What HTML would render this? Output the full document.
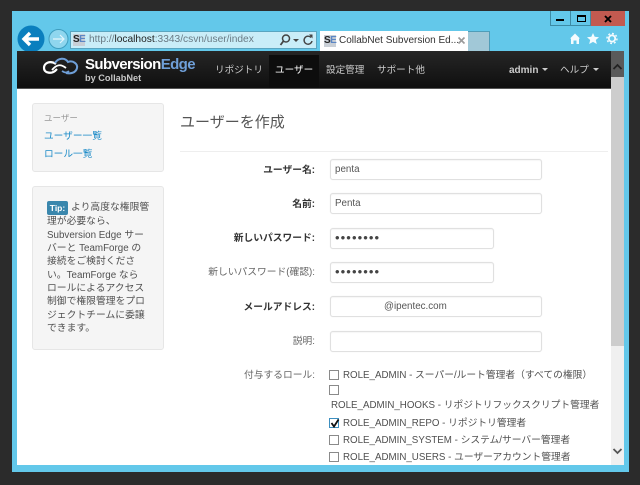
<!DOCTYPE html>
<html lang="ja"><head><meta charset="utf-8"><title>ユーザーを作成</title>
<style>
html,body{margin:0;padding:0;background:#2b2b2b}
body{width:640px;height:485px;position:relative;overflow:hidden;font-family:"Liberation Sans","Noto Sans CJK JP",sans-serif;font-size:9.8px;color:#505050}
.a{position:absolute;white-space:nowrap}
.inp{position:absolute;box-sizing:border-box;height:21px;border:1px solid #e0e0e0;border-radius:3px;background:#fff;font-size:9.8px;color:#555;line-height:21px;padding-left:4px;box-shadow:inset 0 1px 1px rgba(0,0,0,.04),0 0 1px rgba(0,0,0,.1)}
.lb{position:absolute;right:325px;white-space:nowrap;font-size:9.75px;color:#666;line-height:14px;margin-top:1px}
.lb.b{font-weight:bold;color:#333}
.cb{position:absolute;left:329px;width:8px;height:8px;border:1px solid #8a8a8a;background:#fff}
.role{position:absolute;white-space:nowrap;font-size:9.75px;color:#505050;line-height:14px;margin-top:1px}
.nav{position:absolute;top:64px;font-size:9.6px;color:#ccc;white-space:nowrap;line-height:14px}
.car{display:inline-block;width:0;height:0;border-left:3px solid transparent;border-right:3px solid transparent;border-top:3px solid #ccc;margin-left:4px;vertical-align:2px}
.dots{letter-spacing:1.1px;font-size:13px;color:#444;line-height:18px}
</style></head><body>
<!-- window frame -->
<div class="a" style="left:12px;top:11px;width:617px;height:461px;background:#63c8ea"></div>
<!-- window buttons -->
<div class="a" style="left:550px;top:11px;width:21px;height:15px;box-sizing:border-box;border:1px solid #3d8ba5;border-top:0;background:#63c8ea"></div>
<div class="a" style="left:571px;top:11px;width:20px;height:15px;box-sizing:border-box;border:1px solid #3d8ba5;border-top:0;border-left:0;background:#63c8ea"></div>
<div class="a" style="left:591px;top:11px;width:34px;height:15px;background:#c25a50"></div>
<div class="a" style="left:556px;top:19px;width:8px;height:2px;background:#000"></div>
<div class="a" style="left:577px;top:15px;box-sizing:border-box;width:9px;height:7px;border:1px solid #000;border-top-width:2px"></div>
<svg class="a" style="left:604px;top:15px" width="8" height="8" viewBox="0 0 8 8"><path d="M1 1 L7 7 M7 1 L1 7" stroke="#000" stroke-width="1.900" fill="none"/></svg>
<!-- back / forward -->
<svg class="a" style="left:17px;top:25px" width="52" height="28" viewBox="0 0 52 28">
<circle cx="14" cy="14" r="13.500" fill="#0a7fbe"/>
<path d="M7 14 H22 M13 8 L7 14 L13 20" stroke="#fff" stroke-width="3.400" fill="none"/>
<circle cx="41.500" cy="14" r="9.500" fill="#8fd6ee" stroke="#3f9ebf" stroke-width="1"/>
<path d="M36 14 H47 M43 10 L47 14 L43 18" stroke="#e4f6fc" stroke-width="1.200" fill="none"/>
</svg>
<!-- address bar -->
<div class="a" style="left:70px;top:31px;width:247px;height:18px;box-sizing:border-box;border:1px solid #5aa5c0;background:#c9edf8"></div>
<div class="a" style="left:73px;top:34px;width:12px;height:12px;background:#c9cfd6;font:bold 10px/12px 'Liberation Sans',sans-serif;color:#222;letter-spacing:-.5px">S<span style="color:#5b86c5">E</span></div>
<div class="a" style="left:89px;top:33px;font-size:10.200px;line-height:14px;color:#6a7a84">http://<span style="color:#222">localhost</span>:3343/csvn/user/index</div>
<svg class="a" style="left:279px;top:33px" width="36" height="14" viewBox="0 0 36 14">
<circle cx="7" cy="5.500" r="3.500" stroke="#444" stroke-width="1.500" fill="none"/><path d="M4.500 8 L1.500 12" stroke="#444" stroke-width="1.800"/>
<path d="M14 6 h6 l-3 3z" fill="#444"/>
<path d="M32 4.500 A4 4 0 1 0 33 8" stroke="#444" stroke-width="1.400" fill="none"/><path d="M30 1.500 L33.500 1.500 L33.500 5.500z" fill="#444"/>
</svg>
<!-- tab -->
<div class="a" style="left:320px;top:31px;width:148px;height:20px;background:#fff"></div>
<div class="a" style="left:468px;top:31px;width:22px;height:20px;box-sizing:border-box;background:#a1c8d7;border:1px solid #4f9db8;border-bottom:0;border-left:0"></div>
<div class="a" style="left:324px;top:35px;width:12px;height:12px;background:#c9cfd6;font:bold 10px/12px 'Liberation Sans',sans-serif;color:#222;letter-spacing:-.5px">S<span style="color:#5b86c5">E</span></div>
<div class="a" style="left:339px;top:34px;font-size:10px;line-height:14px;color:#333">CollabNet Subversion Ed...</div>
<svg class="a" style="left:457px;top:36px" width="9" height="9" viewBox="0 0 9 9"><path d="M1.500 1.500 L7.500 7.500 M7.500 1.500 L1.500 7.500" stroke="#9a9a9a" stroke-width="1.600"/></svg>
<!-- toolbar icons -->
<svg class="a" style="left:569px;top:32px" width="50" height="13" viewBox="0 0 50 13">
<path d="M1 6.500 L6 1.500 L11 6.500 H10 V12 H7.500 V8.500 H4.500 V12 H2 V6.500z" fill="#f4fbfe"/>
<path d="M24 1 L25.700 4.800 L30 5.200 L26.800 8 L27.800 12 L24 9.900 L20.200 12 L21.200 8 L18 5.200 L22.300 4.800z" fill="#f4fbfe"/>
<circle cx="43" cy="6.500" r="3.200" fill="none" stroke="#f4fbfe" stroke-width="1.800"/><circle cx="43" cy="6.500" r="5" fill="none" stroke="#f4fbfe" stroke-width="1.400" stroke-dasharray="1.900 2"/>
</svg>
<!-- page -->
<div class="a" style="left:17px;top:51px;width:594px;height:414px;background:#fff"></div>
<!-- navbar -->
<div class="a" style="left:17px;top:51px;width:594px;height:38px;background:linear-gradient(#262626,#0f0f0f);border-bottom:1px solid #555;box-sizing:border-box"></div>
<div class="a" style="left:269px;top:55px;width:50px;height:33px;background:#0d0d0d"></div>
<svg class="a" style="left:42px;top:56px" width="38" height="22" viewBox="0 0 38 22">
<path d="M14 8 C8 4 2 7 2 12 C2 17 9 18 13 15 L15 13" stroke="#fff" stroke-width="2.200" fill="none"/>
<path d="M13 7 C16 2 23 1 26 6 C31 4 36 8 35 12 C34 17 28 18 24 17" stroke="#6f9fd8" stroke-width="2" fill="none"/>
<path d="M10 14 C15 8 19 8 24 12" stroke="#fff" stroke-width="1.800" fill="none"/>
<path d="M20 15 C23 17 25 17 27 15" stroke="#6f9fd8" stroke-width="1.800" fill="none"/>
</svg>
<div class="a" style="left:85px;top:56px;font-size:15px;font-weight:bold;color:#fff;line-height:18px;letter-spacing:-.6px">Subversion<span style="color:#6f9fd8">Edge</span></div>
<div class="a" style="left:85px;top:72px;font-size:9.200px;font-weight:bold;color:#c8c8c8;line-height:12px">by CollabNet</div>
<div class="nav" style="left:215px">リポジトリ</div>
<div class="nav" style="left:275px;color:#fff">ユーザー</div>
<div class="nav" style="left:326px">設定管理</div>
<div class="nav" style="left:377px">サポート他</div>
<div class="nav" style="left:509px;font-weight:bold;font-size:10px">admin<span class="car"></span></div>
<div class="nav" style="left:560px">ヘルプ<span class="car"></span></div>
<!-- scrollbar -->
<div class="a" style="left:611px;top:51px;width:13px;height:414px;background:#f0f0f0"></div>
<div class="a" style="left:611px;top:51px;width:13px;height:26px;background:#5a5a5a"></div>
<svg class="a" style="left:612px;top:63px" width="11" height="8" viewBox="0 0 11 8"><path d="M1.500 6 L5.500 2 L9.500 6" stroke="#222" stroke-width="1.800" fill="none"/></svg>
<div class="a" style="left:611px;top:77px;width:13px;height:269px;background:#cdcdcd"></div>
<svg class="a" style="left:612px;top:447px" width="11" height="8" viewBox="0 0 11 8"><path d="M1.500 2 L5.500 6 L9.500 2" stroke="#555" stroke-width="1.800" fill="none"/></svg>
<!-- sidebar -->
<div class="a" style="left:32px;top:103px;width:132px;height:69px;box-sizing:border-box;background:#f5f5f5;border:1px solid #e6e6e6;border-radius:3px"></div>
<div class="a" style="left:44px;top:112px;font-size:8.500px;line-height:12px;color:#999">ユーザー</div>
<div class="a" style="left:44px;top:130px;font-size:9.700px;line-height:14px;color:#1e8cc8">ユーザー一覧</div>
<div class="a" style="left:44px;top:148px;font-size:9.700px;line-height:14px;color:#1e8cc8">ロール一覧</div>
<div class="a" style="left:32px;top:186px;width:132px;height:164px;box-sizing:border-box;background:#f5f5f5;border:1px solid #e6e6e6;border-radius:3px"></div>
<div class="a" style="left:47px;top:201px;width:21px;height:14px;background:#3a87ad;border-radius:2px;color:#fff;font-size:8.500px;font-weight:bold;line-height:14px;text-align:center">Tip:</div>
<div class="a" style="left:71px;top:201px;line-height:14px">より高度な権限管</div>
<div class="a" style="left:47px;top:215px;line-height:14px">理が必要なら、</div>
<div class="a" style="left:47px;top:229px;line-height:14px">Subversion Edge サー</div>
<div class="a" style="left:47px;top:242px;line-height:14px">バーと TeamForge の</div>
<div class="a" style="left:47px;top:255px;line-height:14px">接続をご検討くださ</div>
<div class="a" style="left:47px;top:269px;line-height:14px">い。TeamForge なら</div>
<div class="a" style="left:47px;top:282px;line-height:14px">ロールによるアクセス</div>
<div class="a" style="left:47px;top:295px;line-height:14px">制御で権限管理をプロ</div>
<div class="a" style="left:47px;top:309px;line-height:14px">ジェクトチームに委譲</div>
<div class="a" style="left:47px;top:322px;line-height:14px">できます。</div>
<!-- heading -->
<div class="a" style="left:180px;top:113px;font-size:15px;line-height:20px;color:#555">ユーザーを作成</div>
<div class="a" style="left:180px;top:151px;width:428px;height:1px;background:#eee"></div>
<!-- form -->
<div class="lb b" style="top:163px">ユーザー名:</div>
<div class="inp" style="left:330px;top:159px;width:212px;line-height:20px">penta</div>
<div class="lb b" style="top:197px">名前:</div>
<div class="inp" style="left:330px;top:193px;width:212px;line-height:20px">Penta</div>
<div class="lb b" style="top:231px">新しいパスワード:</div>
<div class="inp dots" style="left:330px;top:228px;width:164px">••••••••</div>
<div class="lb" style="top:265px">新しいパスワード(確認):</div>
<div class="inp dots" style="left:330px;top:262px;width:164px">••••••••</div>
<div class="lb b" style="top:300px">メールアドレス:</div>
<div class="inp" style="left:330px;top:296px;width:212px;padding-left:53px;line-height:20px">@ipentec.com</div>
<div class="lb" style="top:334px">説明:</div>
<div class="inp" style="left:330px;top:331px;width:212px"></div>
<div class="lb" style="top:368px">付与するロール:</div>
<div class="cb" style="top:370px"></div>
<div class="role" style="left:343px;top:368px">ROLE_ADMIN - スーパー/ルート管理者（すべての権限）</div>
<div class="cb" style="top:385px"></div>
<div class="role" style="left:331px;top:398px">ROLE_ADMIN_HOOKS - リポジトリフックスクリプト管理者</div>
<div class="cb" style="top:418px;border-color:#3d8fc0"></div>
<svg class="a" style="left:329px;top:417px" width="12" height="12" viewBox="0 0 12 12"><path d="M2.500 6 L5 9.500 L9.500 2.500" stroke="#111" stroke-width="1.800" fill="none"/></svg>
<div class="role" style="left:343px;top:416px">ROLE_ADMIN_REPO - リポジトリ管理者</div>
<div class="cb" style="top:435px"></div>
<div class="role" style="left:343px;top:433px">ROLE_ADMIN_SYSTEM - システム/サーバー管理者</div>
<div class="cb" style="top:452px"></div>
<div class="role" style="left:343px;top:450px">ROLE_ADMIN_USERS - ユーザーアカウント管理者</div>
</body></html>
